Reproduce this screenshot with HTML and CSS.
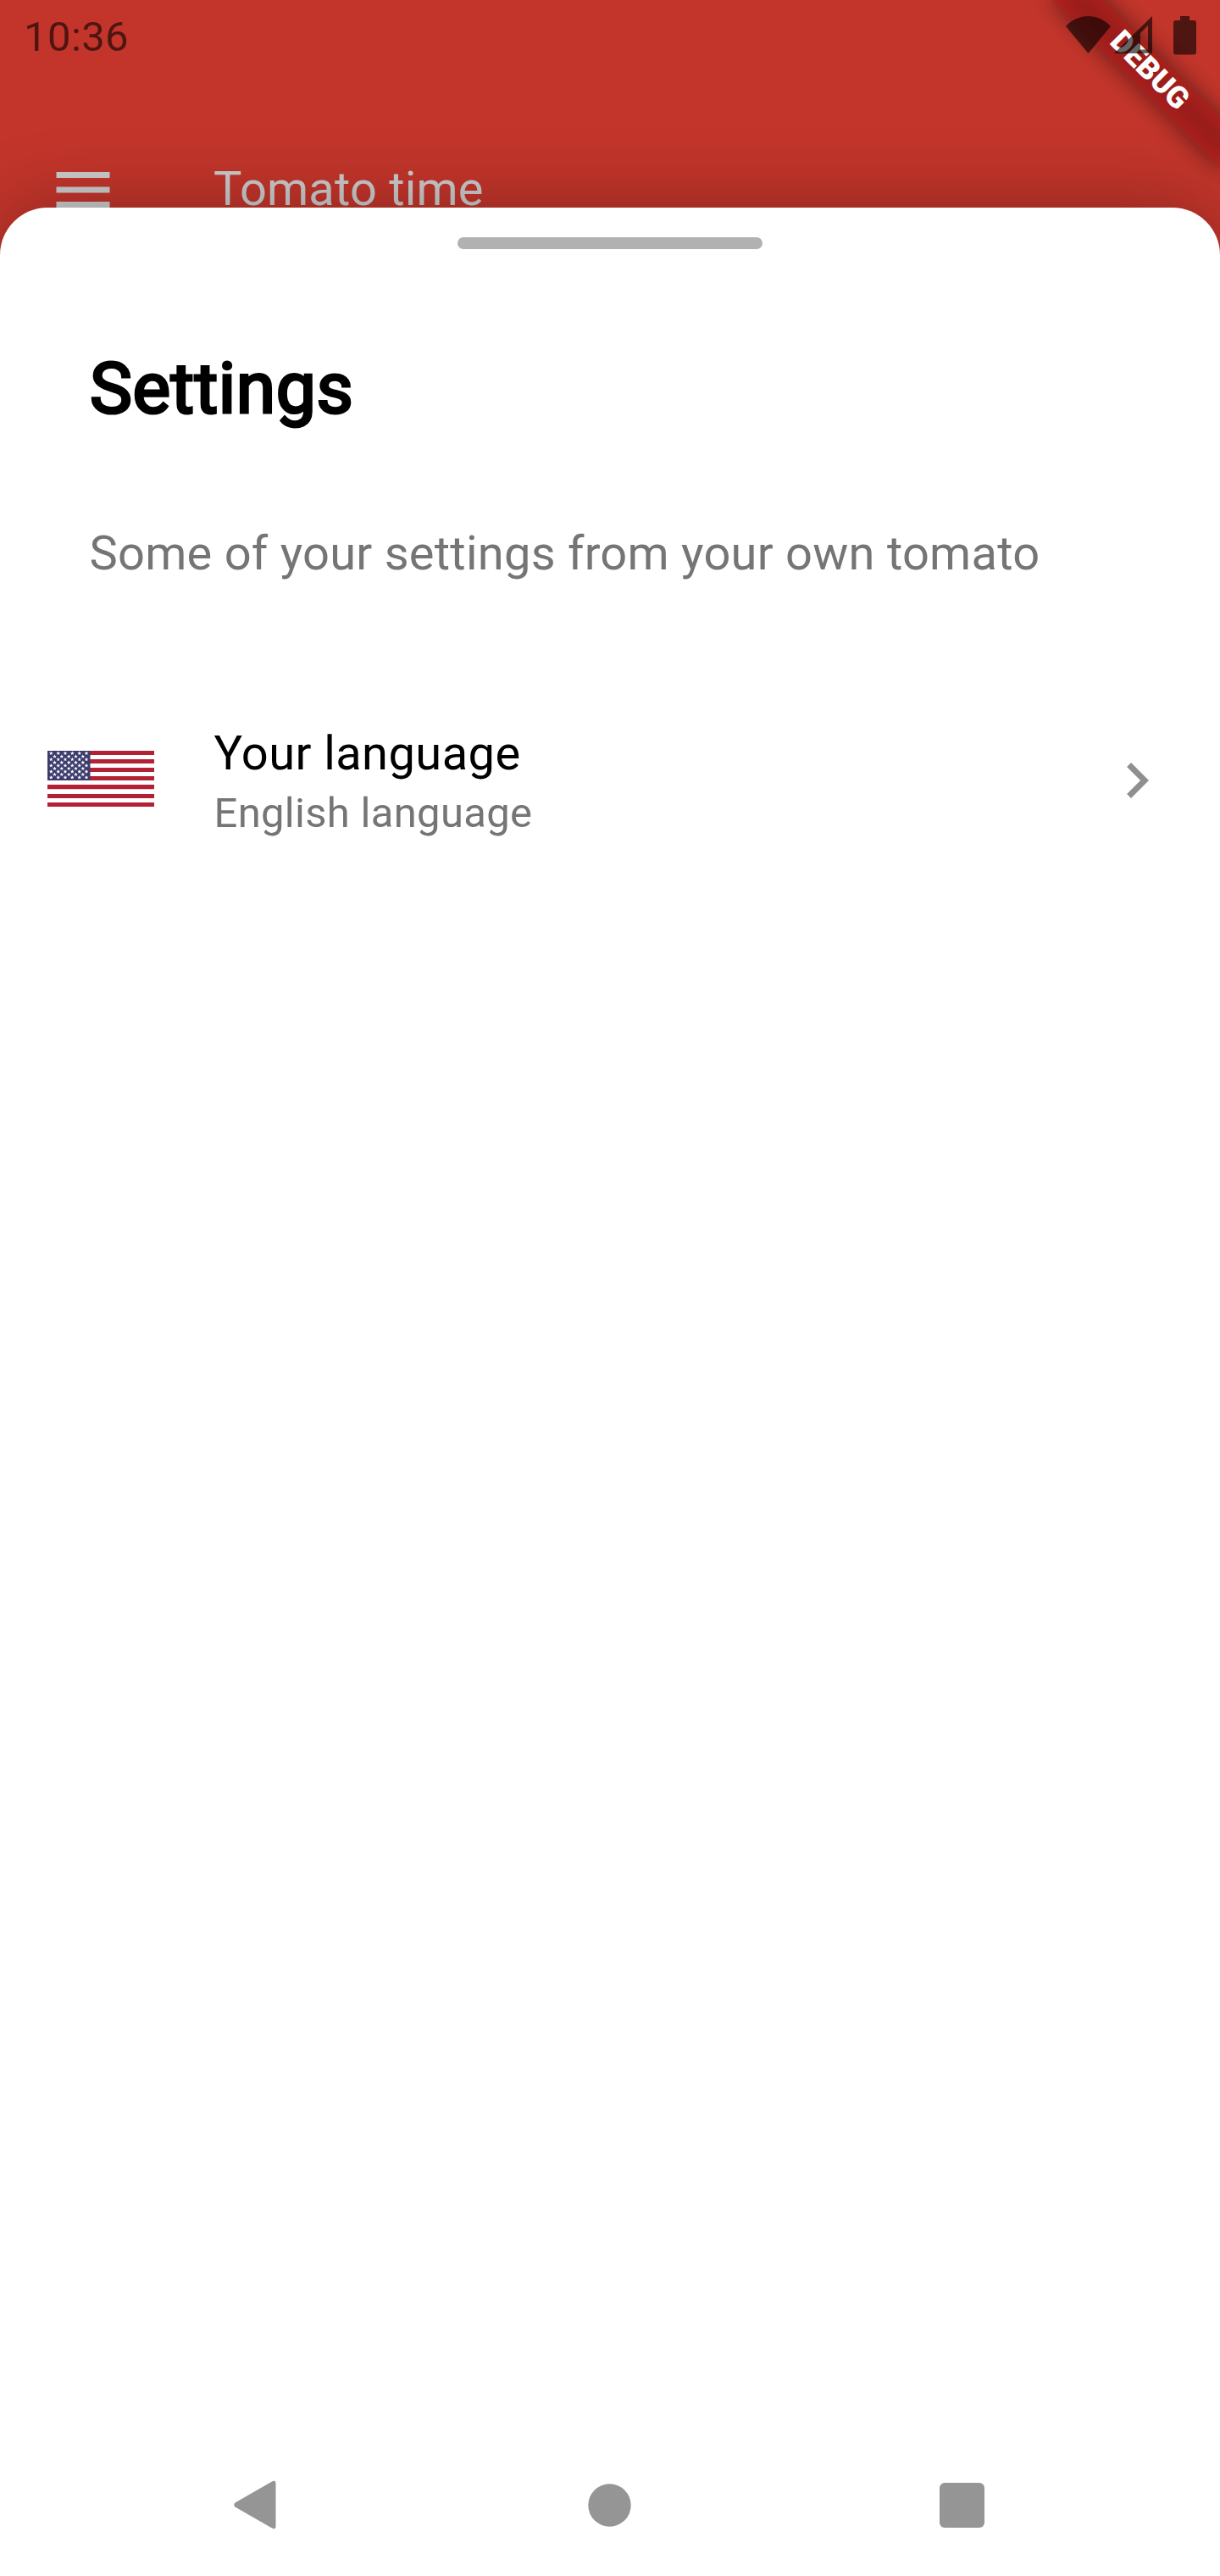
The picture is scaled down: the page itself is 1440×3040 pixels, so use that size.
FILE: index.html
```
<!DOCTYPE html>
<html lang="en">
<head>
<meta charset="utf-8">
<title>Tomato time</title>
<link rel="stylesheet" href="styles.css">
</head>
<body>
<div class="screen">
  <header class="status-bar">
    <span class="clock">10:36</span>
    <div class="status-icons">
      <svg width="53" height="44" viewBox="0 0 53 44"><path d="M0 12Q11.500 0 26.500 0T53 12L26.500 44Z"/></svg>
      <svg width="45" height="44" viewBox="0 0 45 44"><path fill-rule="evenodd" d="M45 0V44H0ZM40 11L31 20V39.500H40Z"/></svg>
      <svg class="battery" width="27" height="46" viewBox="0 0 27 46"><path d="M8 0H19V5H24Q27 5 27 8V42.500Q27 45.500 24 45.500H3Q0 45.500 0 42.500V8Q0 5 3 5H8Z"/></svg>
    </div>
  </header>
  <div class="app-bar">
    <svg class="menu" width="84" height="84" viewBox="0 0 24 24"><path d="M3 18h18v-2H3v2zm0-5h18v-2H3v2zm0-7v2h18V6H3z"/></svg>
    <span class="app-title">Tomato time</span>
  </div>
  <main class="sheet">
    <div class="handle"></div>
    <h1 class="title">Settings</h1>
    <p class="intro">Some of your settings from your own tomato</p>
    <div class="tile">
      <svg class="flag" width="126" height="66" viewBox="0 0 126 66">
        <defs>
          <path id="star" fill="#fff" d="M0-2.500L.7-.8 2.400-.8 1 .4 1.500 2.100 0 1.100-1.500 2.100-1 .4-2.400-.8-.7-.8Z"/>
          <g id="row6"><use href="#star" x="4.300"/><use href="#star" x="12.700"/><use href="#star" x="21"/><use href="#star" x="29.300"/><use href="#star" x="37.700"/><use href="#star" x="46"/></g>
          <g id="row5"><use href="#star" x="8.500"/><use href="#star" x="16.800"/><use href="#star" x="25.200"/><use href="#star" x="33.500"/><use href="#star" x="41.800"/></g>
        </defs>
        <path fill="#fff" d="M0 0H126V66H0Z"/>
        <path fill="#b22234" d="M0 0H126V5H0ZM0 10H126V15H0ZM0 20H126V25H0ZM0 30H126V35H0ZM0 40H126V45.200H0ZM0 50.900H126V56H0ZM0 61H126V66H0Z"/>
        <path fill="#3c3b6e" d="M0 0H50.500V35H0Z"/>
        <use href="#row6" y="3"/><use href="#row5" y="6.700"/><use href="#row6" y="10.200"/><use href="#row5" y="13.800"/><use href="#row6" y="17.500"/><use href="#row5" y="21"/><use href="#row6" y="24.600"/><use href="#row5" y="28"/><use href="#row6" y="31.500"/>
      </svg>
      <div class="tile-text">
        <span class="tile-title">Your language</span>
        <span class="tile-subtitle">English language</span>
      </div>
      <svg class="chevron" width="84" height="84" viewBox="0 0 24 24"><path d="M10 6L8.590 7.410 13.170 12l-4.580 4.590L10 18l6-6z"/></svg>
    </div>
  </main>
  <nav class="nav-bar">
    <svg width="50" height="58" viewBox="0 0 50 58"><path d="M1.500 26.500L45 1.500Q49.500 -1 49.500 4V54Q49.500 59 45 56.500L1.500 31.500Q-1 29 1.500 26.500Z"/></svg>
    <svg class="home" width="51" height="51" viewBox="0 0 51 51"><circle cx="25.500" cy="25.500" r="25.200"/></svg>
    <svg width="53" height="53" viewBox="0 0 53 53"><rect width="53" height="53" rx="6"/></svg>
  </nav>
  <div class="debug-corner"><div class="debug-banner">DEBUG</div></div>
</div>
</body>
</html>
```
FILE: styles.css
```
* { box-sizing: border-box; }

body {
  margin: 0;
  font-family: Roboto, "Liberation Sans", sans-serif;
}

svg { display: block; flex: none; }

.screen {
  position: relative;
  display: flex;
  flex-direction: column;
  width: 1440px;
  height: 3040px;
  overflow: hidden;
  background: #c3352b;
}

.status-bar {
  position: relative;
  z-index: 3;
  display: flex;
  justify-content: space-between;
  height: 126px;
  padding: 19px 28px 0;
}

.clock {
  height: 50px;
  font-size: 49px;
  line-height: 50px;
  letter-spacing: 0.4px;
  color: rgba(0, 0, 0, 0.6);
}

.status-icons {
  display: flex;
  fill: rgba(0, 0, 0, 0.6);
}

.status-icons svg + svg { margin-left: 4px; }
.status-icons svg.battery { margin-left: 25px; }

.app-bar {
  display: flex;
  align-items: center;
  height: 119px;
  padding-top: 77px;
  padding-left: 56px;
}

.menu { fill: #ccc; }

.app-title {
  margin-top: -3px;
  margin-left: 112px;
  font-size: 56px;
  line-height: 64px;
  letter-spacing: 0.2px;
  color: #ccc;
}

.sheet {
  position: relative;
  flex: 1;
  padding-top: 35px;
  background: #fff;
  border-radius: 56px 56px 0 0;
  box-shadow: 0 0 90px rgba(0, 0, 0, 0.3);
}

.handle {
  width: 360px;
  height: 14px;
  margin: 0 auto;
  border-radius: 7px;
  background: #b1b1b1;
}

.title {
  margin: 116px 0 0 106px;
  font-size: 84px;
  font-weight: 400;
  line-height: 98px;
  letter-spacing: 0.6px;
  color: #000;
  -webkit-text-stroke: 3.2px #000;
}

.intro {
  margin: 113px 0 0 105.5px;
  font-size: 56px;
  line-height: 64px;
  letter-spacing: 0.25px;
  color: #757575;
}

.tile {
  display: flex;
  align-items: center;
  margin-top: 157px;
  padding: 0 56px;
}

.flag { margin-top: 5px; }

.tile-text {
  display: flex;
  flex: 1;
  flex-direction: column;
  margin-left: 70.5px;
}

.tile-title {
  margin-top: 15px;
  font-size: 56px;
  line-height: 64px;
  letter-spacing: 0.43px;
  color: #000;
}

.tile-subtitle {
  margin-top: 9px;
  font-size: 49px;
  line-height: 60px;
  letter-spacing: 0.3px;
  color: #757575;
}

.chevron {
  margin-top: 9px;
  fill: #8f8f8f;
}

.nav-bar {
  position: absolute;
  right: 0;
  bottom: 0;
  left: 0;
  display: flex;
  align-items: center;
  justify-content: space-between;
  height: 168px;
  padding: 0 278px 0 276px;
  fill: #959595;
}

.home { margin-left: 4px; }

.debug-corner {
  position: absolute;
  top: 0;
  right: 0;
  width: 300px;
  height: 300px;
  overflow: hidden;
}

.debug-banner {
  position: absolute;
  top: 98px;
  left: 160px;
  width: 280px;
  height: 42px;
  transform: rotate(45deg);
  transform-origin: 140px -98px;
  font-size: 35.7px;
  font-weight: 900;
  line-height: 39px;
  text-align: center;
  color: #fff;
}

.debug-banner::before,
.debug-banner::after {
  content: "";
  position: absolute;
  inset: 0;
}

.debug-banner::before {
  z-index: -2;
  background: rgba(0, 0, 0, 0.5);
  filter: blur(13.9px);
}

.debug-banner::after {
  z-index: -1;
  background: rgba(183, 28, 28, 0.627);
}
```
